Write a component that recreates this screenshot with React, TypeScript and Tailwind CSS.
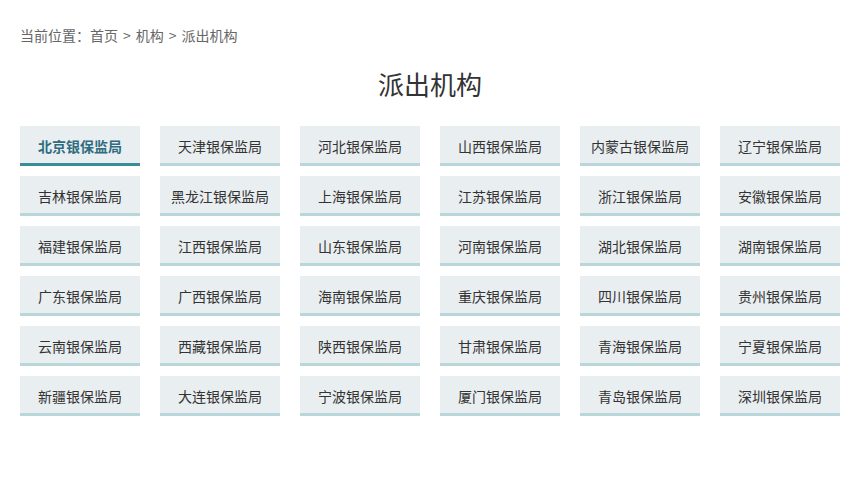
import React from "react";

const items = [
  "北京银保监局","天津银保监局","河北银保监局","山西银保监局","内蒙古银保监局","辽宁银保监局",
  "吉林银保监局","黑龙江银保监局","上海银保监局","江苏银保监局","浙江银保监局","安徽银保监局",
  "福建银保监局","江西银保监局","山东银保监局","河南银保监局","湖北银保监局","湖南银保监局",
  "广东银保监局","广西银保监局","海南银保监局","重庆银保监局","四川银保监局","贵州银保监局",
  "云南银保监局","西藏银保监局","陕西银保监局","甘肃银保监局","青海银保监局","宁夏银保监局",
  "新疆银保监局","大连银保监局","宁波银保监局","厦门银保监局","青岛银保监局","深圳银保监局",
];

export default function App() {
  return (
    <div
      className="w-[860px] h-[486px] bg-white px-5 pt-[26px]"
      style={{ fontFamily: '"Microsoft YaHei", "Noto Sans CJK SC", "Noto Sans", sans-serif' }}
    >
      <div className="text-[14px] leading-[18px] text-[#666]">
        当前位置：首页<span className="px-[5px]">&gt;</span>机构<span className="px-[5px]">&gt;</span>派出机构
      </div>
      <h1 className="mt-[22px] text-center text-[26px] leading-[36px] text-[#333]">派出机构</h1>
      <div className="mt-[24px] grid grid-cols-6 gap-x-5 gap-y-[10px]">
        {items.map((t, i) => (
          <div
            key={t}
            className={
              "h-[40px] flex items-center justify-center bg-[#e9eef1] border-b-[3px] pt-[4px] text-[14px] " +
              (i === 0
                ? "border-[#3a8d98] text-[#2f6c80] font-bold"
                : "border-[#b9d6da] text-[#333]")
            }
          >
            {t}
          </div>
        ))}
      </div>
    </div>
  );
}
